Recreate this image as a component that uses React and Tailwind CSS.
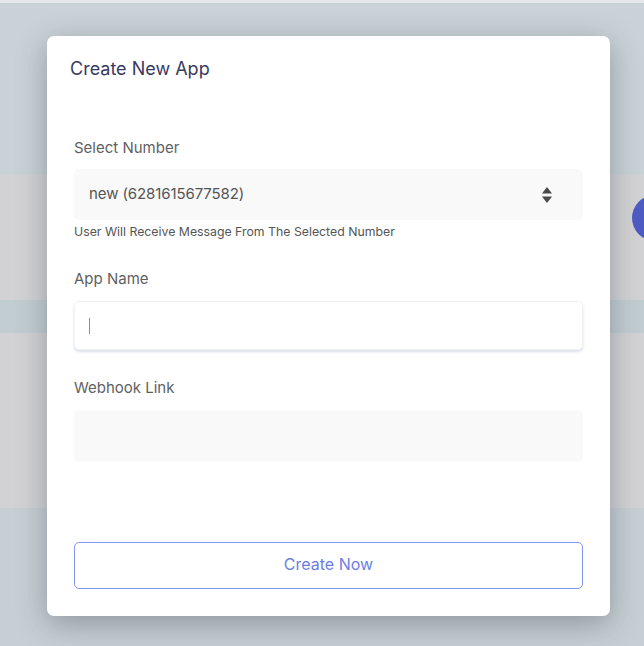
function Field({ label, children, className = "" }) {
  return (
    <div className={className}>
      <label className="block text-[15px] leading-5 text-[#5f5f5f]">{label}</label>
      {children}
    </div>
  );
}

export default function App() {
  return (
    <div
      className="relative h-[646px] w-[644px] overflow-hidden bg-[#c6cfd4]"
      style={{ fontFamily: "Inter, 'Liberation Sans', sans-serif" }}
    >
      {/* page behind the overlay */}
      <div className="flex flex-col">
        <div className="h-[3px] bg-[#e6e7ea]" />
        <div className="h-[172px] bg-[#c9d2d6]" />
        <div className="relative h-[125px] bg-[#d2d2d4]">
          <div className="absolute left-[632px] top-[20px] h-[46px] w-[46px] rounded-full bg-[#4f5bc4]" />
        </div>
        <div className="h-[33px] bg-[#c2cdd2]" />
        <div className="h-[175px] bg-[#d2d2d4]" />
        <div className="flex-1 bg-[#c6cfd4]" />
      </div>

      {/* modal */}
      <div className="absolute left-[47px] top-[36px] w-[563px] h-[580px] rounded-[7px] bg-white shadow-[0_8px_30px_rgba(40,50,60,0.35)]">
        <h2 className="pl-[23px] pt-[22px] text-[18px] leading-[22px] text-[#3a3960]">
          Create New App
        </h2>

        <div className="px-[27px] pt-[58px]">
          <Field label="Select Number">
            <div className="mt-[11px] flex h-[51px] items-center justify-between rounded-[5px] bg-[#f9f9f9] pl-[15px] pr-[31px]">
              <span className="text-[15px] tracking-[-0.1px] text-[#555555]">new (6281615677582)</span>
              <svg width="10" height="16" viewBox="0 0 10 16" className="fill-[#4a4a4a]">
                <path d="M5 0 L10 6.5 L0 6.5 Z" />
                <path d="M0 9.5 L10 9.5 L5 16 Z" />
              </svg>
            </div>
            <p className="mt-[4px] text-[12.3px] leading-4 text-[#555555]">
              User Will Receive Message From The Selected Number
            </p>
          </Field>

          <Field label="App Name" className="mt-[29px]">
            <div className="mt-[12px] flex h-[49px] items-center rounded-[5px] border border-[#f1f2f4] bg-white pl-[14px] shadow-[0_2px_3px_rgba(150,165,190,0.35)]">
              <span className="h-[16px] w-px bg-[#8a8f99]" />
            </div>
          </Field>

          <Field label="Webhook Link" className="mt-[28px]">
            <div className="mt-[12px] h-[52px] rounded-[5px] bg-[#f9f9f9]" />
          </Field>

          <button className="mt-[80px] flex h-[47px] w-full items-center justify-center rounded-[5px] border border-[#8596f2] bg-white pb-[3px] text-[16px] text-[#6b7ee4]">
            Create Now
          </button>
        </div>
      </div>
    </div>
  );
}
